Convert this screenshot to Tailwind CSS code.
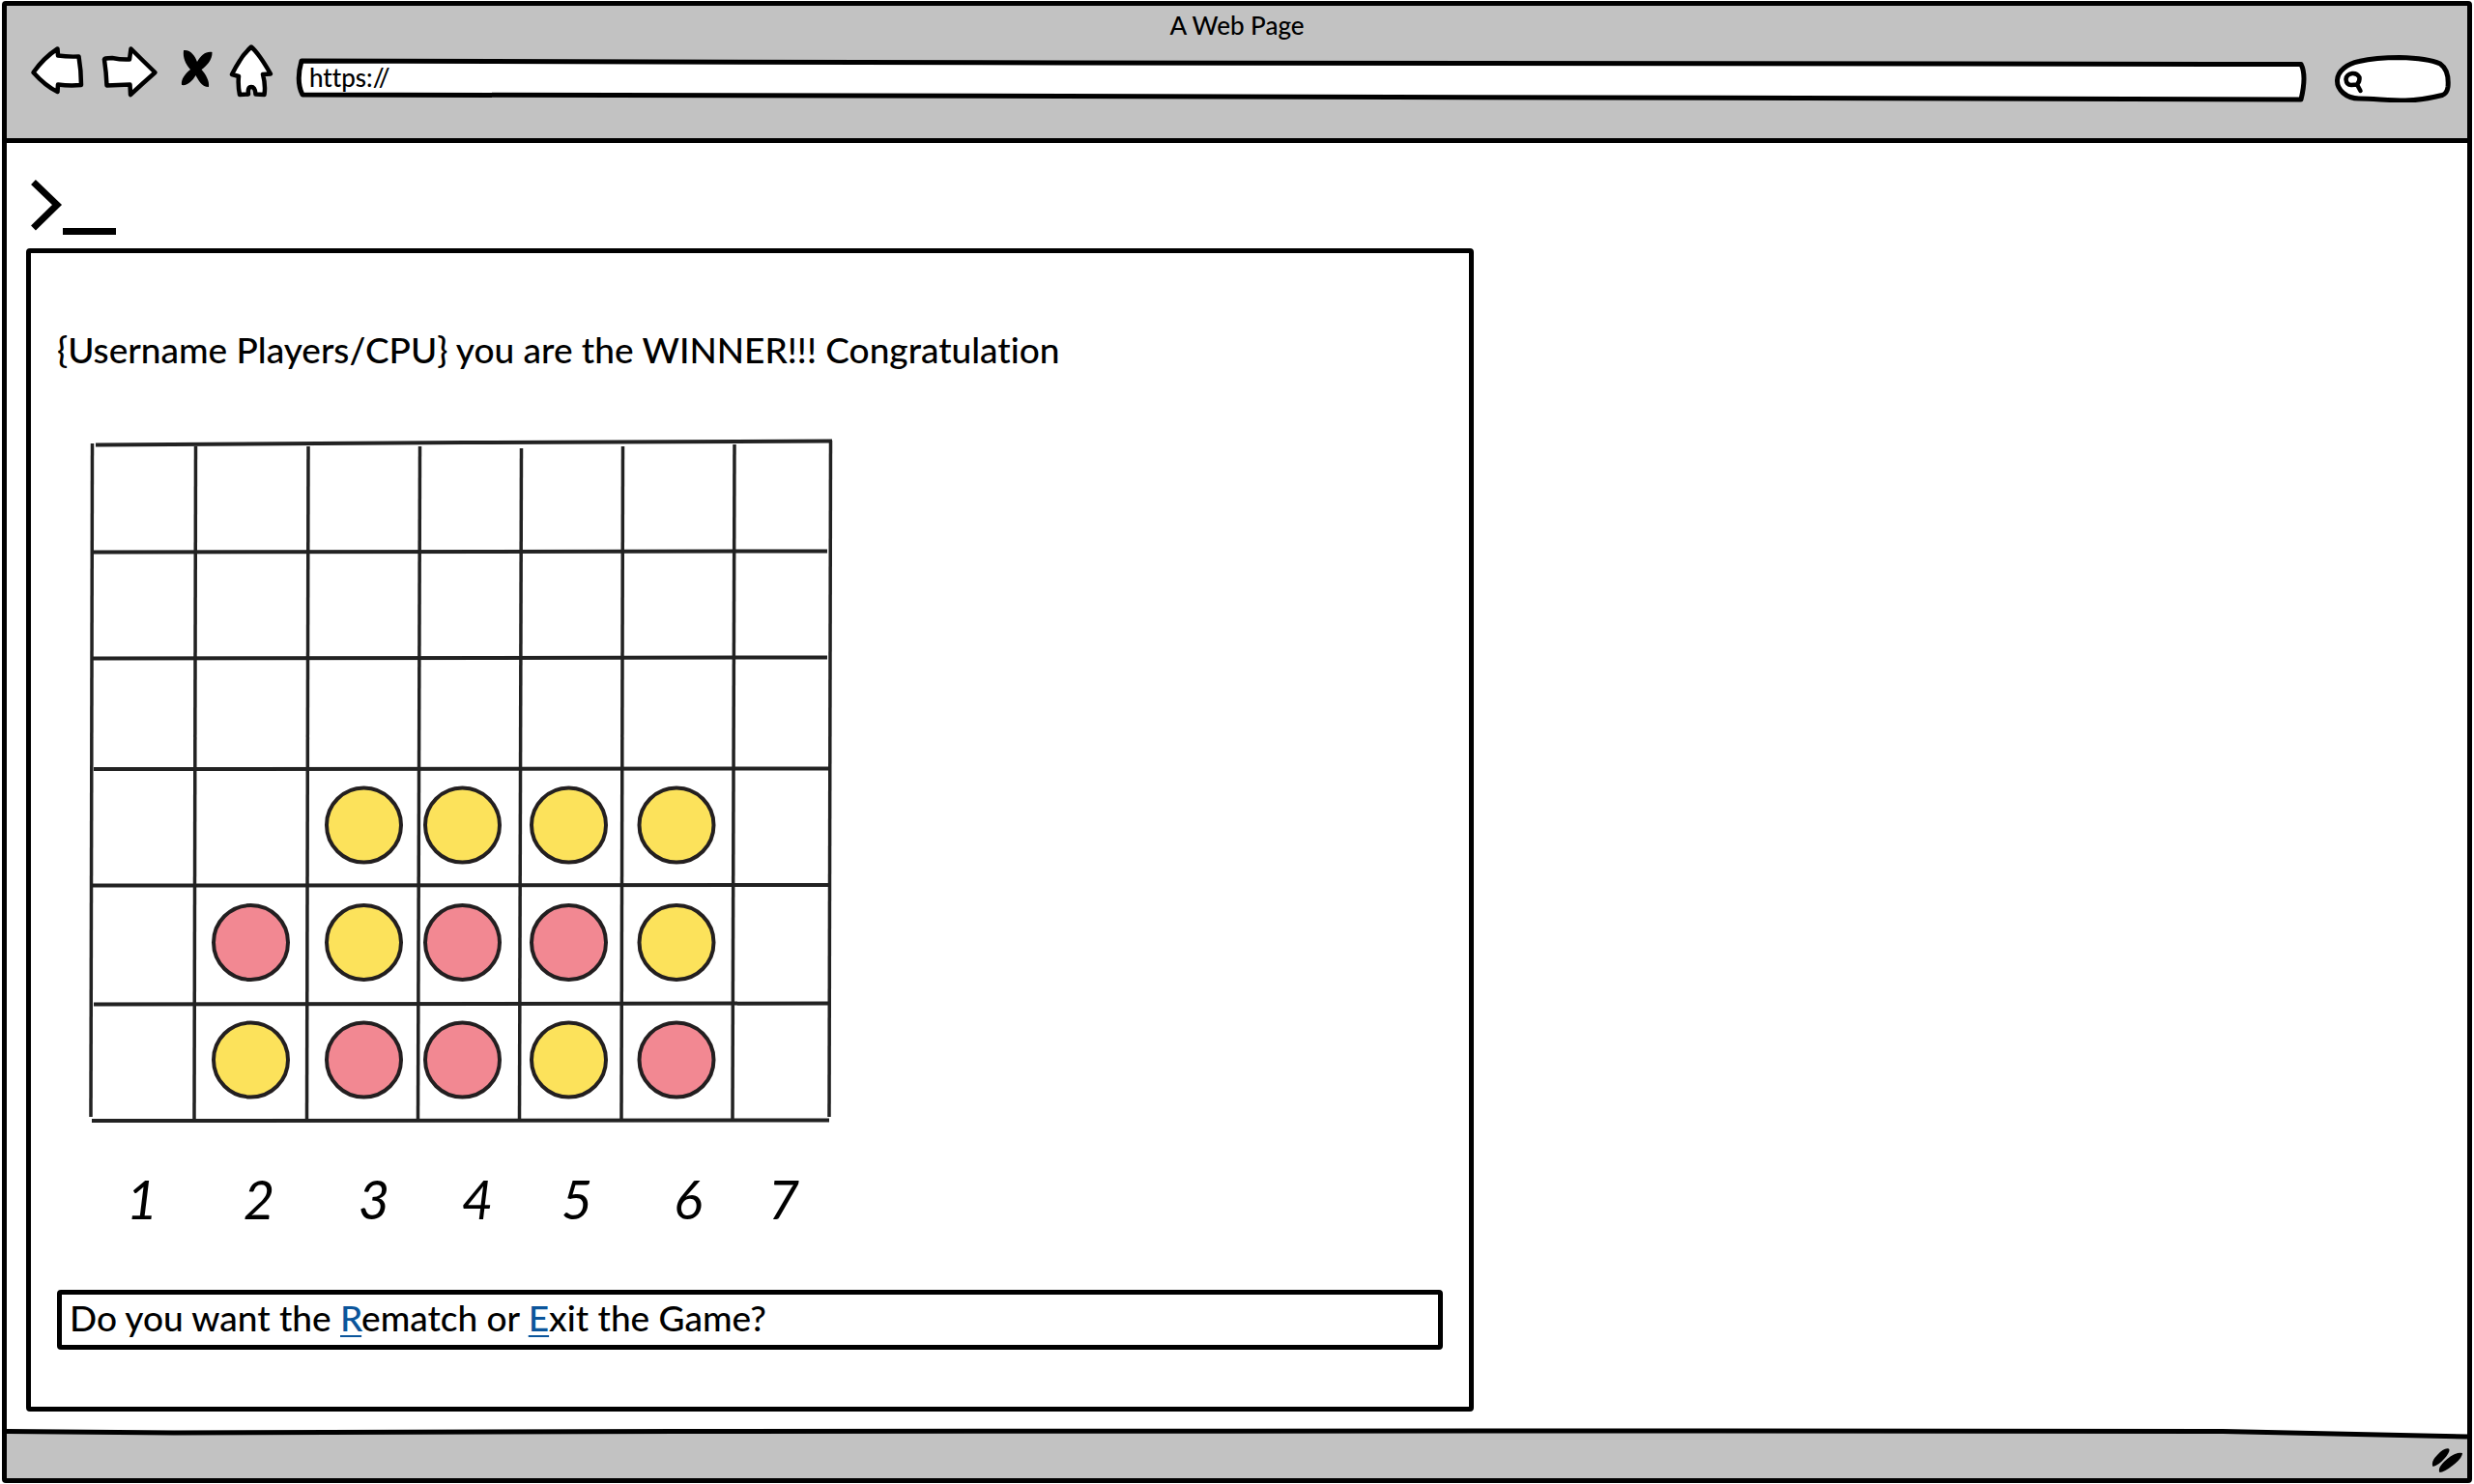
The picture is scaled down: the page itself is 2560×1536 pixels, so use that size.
<!DOCTYPE html>
<html lang="en">
<head>
<meta charset="utf-8">
<meta name="viewport" content="width=device-width, initial-scale=1">
<title>A Web Page</title>
<script src="https://cdn.jsdelivr.net/npm/@tailwindcss/browser@4"></script>
</head>
<body class="bg-white text-black font-['Lato',sans-serif] [font-variant-ligatures:none]">
<div class="flex min-h-screen flex-col px-0.5 py-px">
<div class="flex grow flex-col rounded-sm border-5 border-black">

  <header class="border-b-5 border-black bg-[#c2c2c2] pt-1 pb-[37px]">
    <h1 class="text-center text-[26px] leading-8 font-medium">A Web Page</h1>
    <div class="mt-1 flex h-[60px] pl-[23px] pr-3">
      <button type="button" aria-label="Back" class="w-[58px] shrink-0">
        <svg viewBox="30 46 58 60" class="h-[60px] w-full" fill="white" stroke="black" stroke-width="4.5" stroke-linejoin="round"><path d="M59.500 50.500 Q45 60 34.500 75 Q47 89 59.500 95 L60 87.500 Q72 89 84 88 Q84 73 81.500 58.500 Q70 59 60 57.500 Z"/></svg>
      </button>
      <button type="button" aria-label="Forward" class="ml-4 w-[62px] shrink-0">
        <svg viewBox="104 46 62 60" class="h-[60px] w-full" fill="white" stroke="black" stroke-width="4.500" stroke-linejoin="round"><path d="M135.500 50.500 Q147 62 160.500 75 Q148 86 135 98 L134.500 87.500 Q122 88 110.500 88.500 Q110 75 108 62 Q107 60 116 60 Q126 62 134 61.500 Z"/></svg>
      </button>
      <button type="button" aria-label="Stop" class="ml-4 w-10 shrink-0">
        <svg viewBox="182 46 40 60" class="h-[60px] w-full"><path d="M190 52 C197 51 202 58 204 64 C208 57 213 53 219.500 54 C220 62 213 69 208.500 72 C213 77 217 84 216 90 C208 90 205 82 202.500 78 C199 84 194 89 188 88 C187 82 192 76 197 72 C192 66 189 60 190 52Z"/></svg>
      </button>
      <button type="button" aria-label="Home" class="ml-3 w-[50px] shrink-0">
        <svg viewBox="234 46 50 60" class="h-[60px] w-full" fill="white" stroke="black" stroke-width="4.500" stroke-linejoin="round"><path d="M260 48.500 Q252 56 248 63 Q244 69 240 77 L247 79 Q246 88 248 98 L257 97.500 Q256 90 260 90 Q264 90 264.500 97.500 L273.500 98 Q275 88 272 77 L280 76.500 Q274 66 269 59 Q264 52 260 48.500Z"/></svg>
      </button>
      <div class="relative ml-5 flex grow">
        <svg viewBox="304 46 2084 60" preserveAspectRatio="none" class="absolute inset-0 h-full w-full" fill="white" stroke="black" stroke-width="5" stroke-linejoin="round"><path d="M312 63 L1100 65 L2380 66.500 Q2386 78 2380 103 L1100 99.500 L313 98 Q306 84 312 63Z"/></svg>
        <input type="text" aria-label="Address" value="https://" class="relative mt-4 h-9 w-full bg-transparent px-4 text-[26px] leading-9 font-medium outline-none">
      </div>
      <div class="relative ml-6 flex w-32 shrink-0">
        <svg viewBox="2412 46 128 60" class="absolute inset-0 h-full w-full" fill="white" stroke="black" stroke-width="5" stroke-linejoin="round" stroke-linecap="round"><path d="M2440 102 C2427 102 2417 93 2417.500 83 C2418 73 2428 66 2440 63.500 C2455 60 2467 59.500 2482 59.500 C2500 60 2515 62 2524 66 C2531 71 2533 79 2532 90 Q2531 97 2526 98.500 C2512 102 2502 104 2488 104 C2470 104 2455 102 2440 102Z"/><path stroke-width="4.500" d="M2438 87.500 Q2441 84 2440.500 80 Q2438 75.500 2433 76 Q2427 77 2426.500 82 Q2427 88 2432 88 L2438 87.500 L2441.500 94"/></svg>
        <input type="text" aria-label="Search" class="relative mt-4 ml-9 h-9 w-20 bg-transparent text-[26px] outline-none">
      </div>
    </div>
  </header>

  <main class="grow px-5 pt-9 pb-4">
    <svg viewBox="27 184 97 64" class="h-16 w-[97px]" fill="none" stroke="black" stroke-width="7" aria-hidden="true"><path d="M34.500 188.500 L59 212 L34.500 236"/><path d="M65 239.500 H120"/></svg>

    <section class="mt-[9px] w-full max-w-[1498px] rounded-sm border-5 border-black px-[27px] pt-19 pb-[59px]">
      <h2 class="text-[37px] leading-12 font-medium">{Username Players/CPU} you are the WINNER!!! Congratulation</h2>

      <svg viewBox="89 449 776 718" class="mt-[63px] ml-[30px] h-[718px] w-[776px]" fill="none" stroke="#222" stroke-width="3.500" role="img" aria-label="Game board, yellow has four in a row">
        <g stroke-width="4">
          <path d="M99 460.500 L480 458 L861 456.500"/>
          <path d="M95 571.500 L856 570.500"/>
          <path d="M95 681.500 L856 680.500"/>
          <path d="M97 796 L858 795.500"/>
          <path d="M95 916.500 L858 916"/>
          <path d="M97 1039.500 L859 1038.500"/>
          <path d="M95 1160 L858 1159.500"/>
        </g>
        <path d="M95.500 459 L94 1156"/>
        <path d="M202.500 462 L201 1159"/>
        <path d="M319 462 L317.500 1159"/>
        <path d="M434.500 462 L432.500 1159"/>
        <path d="M539.500 464 L537.500 1159"/>
        <path d="M644.500 462 L643 1159"/>
        <path d="M760 460 L758 1159"/>
        <path d="M859.500 456 L858 1156"/>
        <g fill="#fce25b" stroke="#231f20" stroke-width="4">
          <circle cx="376.500" cy="854" r="38.500"/><circle cx="478.500" cy="854" r="38.500"/><circle cx="588.500" cy="854" r="38.500"/><circle cx="700" cy="854" r="38.500"/>
          <circle cx="376.500" cy="975.500" r="38.500"/><circle cx="700" cy="975.500" r="38.500"/>
          <circle cx="259.500" cy="1097" r="38.500"/><circle cx="588.500" cy="1097" r="38.500"/>
        </g>
        <g fill="#f28892" stroke="#231f20" stroke-width="4">
          <circle cx="259.500" cy="975.500" r="38.500"/><circle cx="478.500" cy="975.500" r="38.500"/><circle cx="588.500" cy="975.500" r="38.500"/>
          <circle cx="376.500" cy="1097" r="38.500"/><circle cx="478.500" cy="1097" r="38.500"/><circle cx="700" cy="1097" r="38.500"/>
        </g>
      </svg>

      <ol class="mt-[42px] ml-7 grid grid-cols-[120px_122px_116px_98px_108px_122px_76px] text-center text-[56px] leading-16 italic">
        <li>1</li><li>2</li><li>3</li><li>4</li><li>5</li><li>6</li><li>7</li>
      </ol>

      <p class="mt-[62px] rounded-sm border-5 border-black px-2 pb-1 text-[37px] leading-12 font-medium">Do you want the <a href="#rematch" class="text-[#0b559b] underline decoration-2 underline-offset-4">R</a>ematch or <a href="#exit" class="text-[#0b559b] underline decoration-2 underline-offset-4">E</a>xit the Game?</p>
    </section>
  </main>

  <footer class="relative flex h-[53px] justify-end">
    <svg viewBox="7 1476 2546 53" preserveAspectRatio="none" class="absolute inset-0 h-full w-full" aria-hidden="true"><path fill="#c2c2c2" d="M7 1481 L2400 1481 L2553 1486 V1529 H7Z"/><path fill="none" stroke="black" stroke-width="5" d="M7 1480.500 L180 1482 L700 1480.500 L1700 1480 L2300 1480.500 L2553 1486"/></svg>
    <svg viewBox="2513 1476 40 53" class="relative h-full w-10" aria-hidden="true"><path d="M2517.500 1517 Q2515 1512 2522 1505 Q2529 1497 2534 1498.500 Q2536 1501 2530 1508 Q2523 1516 2517.500 1517Z M2524.500 1523 Q2522 1519 2529 1512 Q2541 1501 2548 1503 Q2548 1508 2539 1515 Q2529 1523 2524.500 1523Z"/></svg>
  </footer>
</div>
</div>
</body>
</html>
